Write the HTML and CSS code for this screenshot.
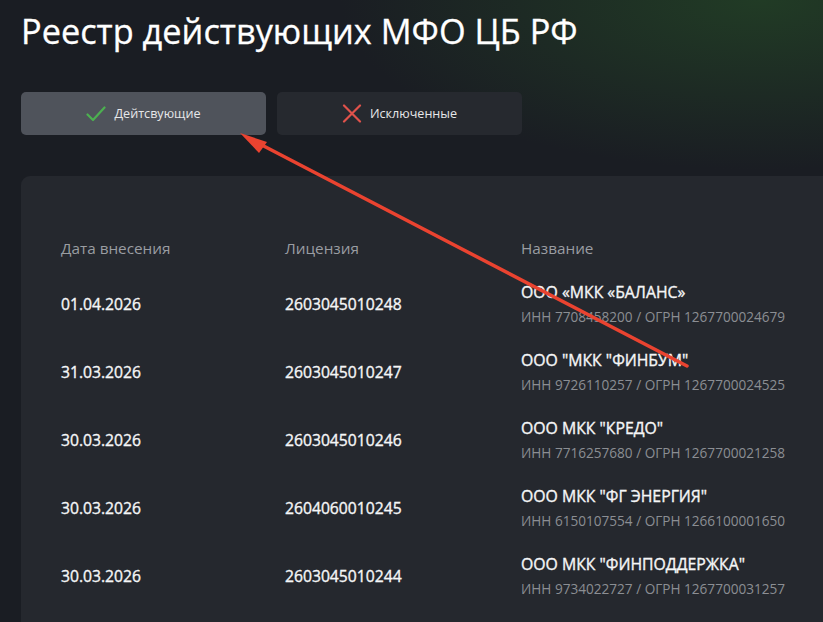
FILE: index.html
```html
<!DOCTYPE html>
<html lang="ru">
<head>
<meta charset="utf-8">
<title>Реестр действующих МФО ЦБ РФ</title>
<link rel="stylesheet" href="styles.css">
</head>
<body>
<div class="page">
  <h1 class="title">Реестр действующих МФО ЦБ РФ</h1>
  <div class="tabs">
    <button class="tab tab-active">
      <svg class="tab-icon" width="20" height="16" viewBox="0 0 20 16"><path d="M1.5 8.5 L7 14 L18.5 1.5" fill="none" stroke="#4cb050" stroke-width="2.2" stroke-linecap="round" stroke-linejoin="round"/></svg>
      <span>Дейтсвующие</span>
    </button>
    <button class="tab">
      <svg class="tab-icon" width="20" height="19" viewBox="0 0 20 19"><path d="M2 1.5 L18 17.5 M18 1.5 L2 17.5" fill="none" stroke="#e0524b" stroke-width="2.2" stroke-linecap="round"/></svg>
      <span>Исключенные</span>
    </button>
  </div>
  <div class="card">
    <div class="table">
      <div class="row head">
        <div class="c1">Дата внесения</div>
        <div class="c2">Лицензия</div>
        <div class="c3">Название</div>
      </div>
      <div class="row">
        <div class="c1 val">01.04.2026</div>
        <div class="c2 val">2603045010248</div>
        <div class="c3"><div class="name">ООО «МКК «БАЛАНС»</div><div class="ids">ИНН 7708458200 / ОГРН 1267700024679</div></div>
      </div>
      <div class="row">
        <div class="c1 val">31.03.2026</div>
        <div class="c2 val">2603045010247</div>
        <div class="c3"><div class="name">ООО "МКК "ФИНБУМ"</div><div class="ids">ИНН 9726110257 / ОГРН 1267700024525</div></div>
      </div>
      <div class="row">
        <div class="c1 val">30.03.2026</div>
        <div class="c2 val">2603045010246</div>
        <div class="c3"><div class="name">ООО МКК "КРЕДО"</div><div class="ids">ИНН 7716257680 / ОГРН 1267700021258</div></div>
      </div>
      <div class="row">
        <div class="c1 val">30.03.2026</div>
        <div class="c2 val">2604060010245</div>
        <div class="c3"><div class="name">ООО МКК "ФГ ЭНЕРГИЯ"</div><div class="ids">ИНН 6150107554 / ОГРН 1266100001650</div></div>
      </div>
      <div class="row">
        <div class="c1 val">30.03.2026</div>
        <div class="c2 val">2603045010244</div>
        <div class="c3"><div class="name">ООО МКК "ФИНПОДДЕРЖКА"</div><div class="ids">ИНН 9734022727 / ОГРН 1267700031257</div></div>
      </div>
    </div>
  </div>
</div>
<svg class="annotation" width="823" height="622" viewBox="0 0 823 622">
  <line x1="687" y1="366" x2="256" y2="142" stroke="#ea4330" stroke-width="3.5" stroke-linecap="round"/>
  <polygon points="240,133 267,142 259,153" fill="#ea4330"/>
</svg>
</body>
</html>
```
FILE: styles.css
```css
* { box-sizing: border-box; }
html, body {
  margin: 0;
  padding: 0;
  width: 823px;
  height: 622px;
  overflow: hidden;
}
body {
  position: relative;
  font-family: "Open Sans", "Noto Sans", sans-serif;
  color: #f2f3f5;
  background:
    radial-gradient(ellipse 420px 170px at 760px 0px, rgba(36, 72, 38, 0.7), rgba(36, 72, 38, 0) 100%),
    #1a1d23;
}
.page {
  padding: 10px 0 0 21px;
}
.title {
  margin: 0;
  font-size: 34.3px;
  line-height: 41px;
  font-weight: 500;
  color: #ffffff;
  letter-spacing: 0;
  -webkit-text-stroke: 0.3px #ffffff;
}
.tabs {
  display: flex;
  gap: 11px;
  margin-top: 41px;
}
.tab {
  width: 245px;
  height: 43px;
  border: none;
  border-radius: 5px;
  background: #26292f;
  color: #e6e7e9;
  font-family: inherit;
  font-size: 12.6px;
  display: flex;
  align-items: center;
  justify-content: center;
  gap: 8px;
  padding: 0;
}
.tab-active {
  background: #4f535b;
}
.tab-icon { display: block; }
.card {
  margin-top: 41px;
  width: 830px;
  height: 446px;
  background: #25282e;
  border-radius: 9px 0 0 0;
  padding: 49px 0 0 40px;
}
.row {
  display: grid;
  grid-template-columns: 224px 236px 1fr;
  height: 68px;
  align-items: center;
}
.row.head {
  height: 45px;
  color: #9a9da2;
  font-size: 15.3px;
}
.val {
  font-size: 15.7px;
  font-weight: 500;
  color: #f5f6f7;
  -webkit-text-stroke: 0.35px #f5f6f7;
}
.name {
  font-size: 15.8px;
  font-weight: 500;
  line-height: 20px;
  color: #f5f6f7;
  -webkit-text-stroke: 0.35px #f5f6f7;
}
.ids {
  margin-top: 5px;
  font-size: 13.6px;
  line-height: 19px;
  color: #8b8e93;
}
.annotation {
  position: absolute;
  left: 0;
  top: 0;
  pointer-events: none;
}
```
